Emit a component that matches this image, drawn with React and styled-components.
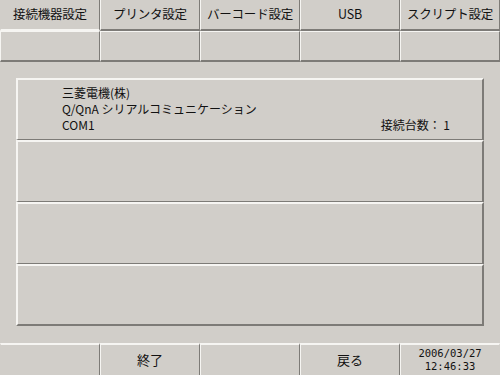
import React from 'react';
import styled, { createGlobalStyle } from 'styled-components';

const LIGHT = '#f6f5f2';
const DARK = '#7d7b77';
const FACE = '#d1cec9';

const GlobalStyle = createGlobalStyle`
  html, body {
    margin: 0;
    padding: 0;
    background: ${FACE};
  }
  body {
    font-family: "Noto Sans CJK JP", "DejaVu Sans", sans-serif;
    color: #111;
  }
`;

const Screen = styled.div`
  width: 500px;
  height: 375px;
  display: flex;
  flex-direction: column;
  overflow: hidden;
  background: ${FACE};
`;

const Bar = styled.div`
  display: grid;
  grid-template-columns: repeat(5, 100px);
  height: ${props => props.height}px;
  flex-shrink: 0;
`;

const Tab = styled.div`
  box-sizing: border-box;
  display: flex;
  align-items: center;
  justify-content: center;
  padding-bottom: 2px;
  border-left: 1px solid ${props => props.first ? 'transparent' : LIGHT};
  border-right: 1px solid ${DARK};
  border-bottom: 2px solid ${props => props.active ? LIGHT : DARK};
  font-size: 12.5px;
  white-space: nowrap;
  letter-spacing: -0.2px;
`;

const SubCell = styled.div`
  box-sizing: border-box;
  border-top: 1px solid ${LIGHT};
  border-left: 1px solid ${LIGHT};
  border-right: 1px solid ${DARK};
  border-bottom: 2px solid ${DARK};
`;

const Panel = styled.div`
  margin: 16px 16px 0;
  display: flex;
  flex-direction: column;
`;

const Row = styled.div`
  box-sizing: border-box;
  height: 62px;
  border-top: 2px solid ${LIGHT};
  border-left: 2px solid ${LIGHT};
  border-right: 2px solid ${DARK};
  border-bottom: ${props => props.last ? 2 : 1}px solid ${DARK};
  padding: 5px 32px 0 44px;
  display: flex;
  flex-direction: column;
  font-size: 12px;
  line-height: 16px;
`;

const Line = styled.div`
  display: flex;
  justify-content: space-between;
  white-space: nowrap;
`;

const Footer = styled(Bar)`
  margin-top: auto;
`;

const FootCell = styled.div`
  box-sizing: border-box;
  display: flex;
  flex-direction: column;
  align-items: center;
  justify-content: center;
  border-top: 2px solid ${LIGHT};
  border-left: 1px solid ${props => props.first ? 'transparent' : LIGHT};
  border-right: 1px solid ${props => props.last ? 'transparent' : DARK};
  font-size: 13px;
  line-height: 16px;
`;

const Clock = styled.span`
  font-family: "DejaVu Sans Mono", "Liberation Mono", monospace;
  font-size: 10.5px;
  line-height: 13px;
`;

const tabs = ['接続機器設定', 'プリンタ設定', 'バーコード設定', 'USB', 'スクリプト設定'];

const App = () => (
  <Screen>
    <GlobalStyle />
    <Bar height={31}>
      {tabs.map((t, i) => (
        <Tab key={t} first={i === 0} active={i === 0}>{t}</Tab>
      ))}
    </Bar>
    <Bar height={31}>
      {tabs.map(t => <SubCell key={t} />)}
    </Bar>
    <Panel>
      <Row>
        <Line>三菱電機(株)</Line>
        <Line>Q/QnA シリアルコミュニケーション</Line>
        <Line>
          <span>COM1</span>
          <span>接続台数： 1</span>
        </Line>
      </Row>
      <Row />
      <Row />
      <Row last />
    </Panel>
    <Footer height={32}>
      <FootCell first />
      <FootCell>終了</FootCell>
      <FootCell />
      <FootCell>戻る</FootCell>
      <FootCell last>
        <Clock>2006/03/27</Clock>
        <Clock>12:46:33</Clock>
      </FootCell>
    </Footer>
  </Screen>
);

export default App;
